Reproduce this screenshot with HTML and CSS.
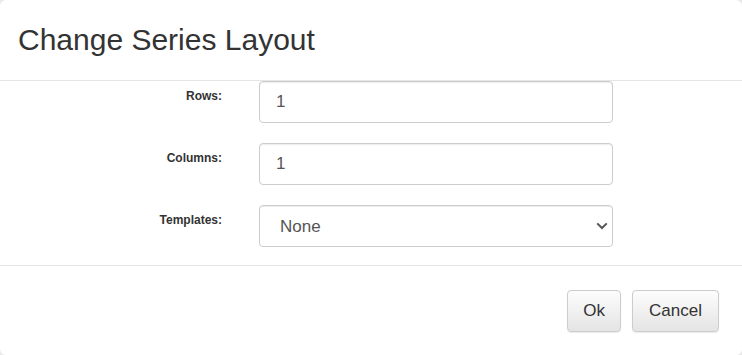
FILE: index.html
```html
<!DOCTYPE html>
<html>
<head>
<meta charset="utf-8">
<link rel="stylesheet" href="styles.css">
</head>
<body>
<div class="modal">
  <div class="modal-header">
    <h4 class="modal-title">Change Series Layout</h4>
  </div>
  <div class="modal-body">
    <div class="form-row">
      <label class="control-label">Rows:</label>
      <input class="form-control" type="text" value="1">
    </div>
    <div class="form-row">
      <label class="control-label">Columns:</label>
      <input class="form-control" type="text" value="1">
    </div>
    <div class="form-row">
      <label class="control-label">Templates:</label>
      <div class="select-wrap">
        <select class="form-control select-control">
          <option>None</option>
        </select>
        <svg class="chevron" width="12" height="8" viewBox="0 0 12 8"><path d="M1.2 1.4 L6 6 L10.8 1.4" fill="none" stroke="#555" stroke-width="2"/></svg>
      </div>
    </div>
  </div>
  <div class="modal-footer">
    <button class="btn">Ok</button>
    <button class="btn btn-wide">Cancel</button>
  </div>
</div>
</body>
</html>
```
FILE: styles.css
```css
html, body {
  margin: 0;
  padding: 0;
  background: #e9e9e9;
  height: 100%;
}
body {
  font-family: "Liberation Sans", Arial, sans-serif;
  color: #333;
  overflow: hidden;
}
.modal {
  background: #fff;
  border-radius: 6px;
  width: 742px;
  height: 355px;
  box-sizing: border-box;
  display: flex;
  flex-direction: column;
}
.modal-header {
  padding: 23px 18px 24px;
  border-bottom: 1px solid #e5e5e5;
}
.modal-title {
  margin: 0;
  font-size: 30px;
  line-height: 33px;
  font-weight: normal;
  color: #333;
}
.modal-body {
  padding: 0 0 18px;
  display: flex;
  flex-direction: column;
  gap: 20px;
}
.form-row {
  display: grid;
  grid-template-columns: 222px 354px;
  column-gap: 37px;
  align-items: start;
}
.control-label {
  text-align: right;
  font-size: 12px;
  font-weight: bold;
  line-height: 17px;
  padding-top: 7px;
  color: #333;
}
.form-control {
  box-sizing: border-box;
  height: 42px;
  width: 354px;
  margin: 0;
  padding: 0 16px;
  font-family: "Liberation Sans", Arial, sans-serif;
  font-size: 17px;
  color: #555;
  background: #fff;
  border: 1px solid #ccc;
  border-radius: 4px;
  box-shadow: inset 0 1px 1px rgba(0,0,0,.075);
  outline: none;
}
.select-wrap {
  position: relative;
  width: 354px;
  height: 42px;
}
.select-control {
  -webkit-appearance: none;
  appearance: none;
  padding-left: 20px;
  padding-right: 30px;
}
.chevron {
  position: absolute;
  right: 5px;
  top: 17px;
  pointer-events: none;
}
.modal-footer {
  border-top: 1px solid #e5e5e5;
  padding: 24px 23px 24px 0;
  display: flex;
  justify-content: flex-end;
  gap: 11px;
}
.btn {
  height: 42px;
  padding: 0 15px;
  font-family: "Liberation Sans", Arial, sans-serif;
  font-size: 17px;
  color: #333;
  background: linear-gradient(to bottom, #fdfdfd 0%, #e4e4e4 100%);
  border: 1px solid #ccc;
  border-radius: 4px;
  box-shadow: inset 0 1px 0 rgba(255,255,255,.15), 0 1px 1px rgba(0,0,0,.08);
}
.btn-wide {
  padding: 0 16px;
}
```
